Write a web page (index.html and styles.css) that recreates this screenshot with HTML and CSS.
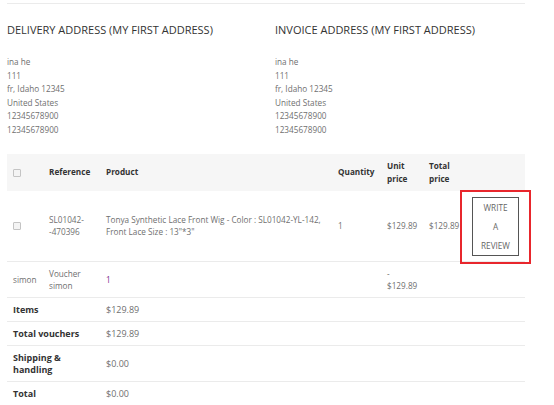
FILE: index.html
```html
<!DOCTYPE html>
<html>
<head>
<meta charset="utf-8">
<link rel="stylesheet" href="styles.css">
</head>
<body>
<div class="page">
  <div class="addresses">
    <div class="address first">
      <h3 class="addr-title">Delivery address (My first address)</h3>
      <div class="addr-lines">
        <div>ina he</div>
        <div>111</div>
        <div>fr, Idaho 12345</div>
        <div>United States</div>
        <div>12345678900</div>
        <div>12345678900</div>
      </div>
    </div>
    <div class="address">
      <h3 class="addr-title">Invoice address (My first address)</h3>
      <div class="addr-lines">
        <div>ina he</div>
        <div>111</div>
        <div>fr, Idaho 12345</div>
        <div>United States</div>
        <div>12345678900</div>
        <div>12345678900</div>
      </div>
    </div>
  </div>

  <table class="order">
    <colgroup>
      <col class="c-check"><col class="c-ref"><col class="c-prod"><col class="c-qty"><col class="c-unit"><col class="c-total"><col class="c-act">
    </colgroup>
    <thead>
      <tr>
        <th><span class="chk"></span></th>
        <th>Reference</th>
        <th>Product</th>
        <th>Quantity</th>
        <th>Unit price</th>
        <th>Total price</th>
        <th></th>
      </tr>
    </thead>
    <tbody>
      <tr class="item">
        <td><span class="chk"></span></td>
        <td>SL01042--470396</td>
        <td>Tonya Synthetic Lace Front Wig - Color : SL01042-YL-142, Front Lace Size : 13"*3"</td>
        <td>1</td>
        <td class="nowrap">$129.89</td>
        <td class="nowrap">$129.89</td>
        <td class="action">
          <span class="highlight"></span>
          <a class="review-btn">WRITE<br>A<br>REVIEW</a>
        </td>
      </tr>
      <tr class="voucher">
        <td>simon</td>
        <td>Voucher simon</td>
        <td><span class="qty-link">1</span></td>
        <td></td>
        <td>-<br>$129.89</td>
        <td></td>
        <td></td>
      </tr>
      <tr class="sum">
        <td colspan="2" class="label">Items</td>
        <td colspan="5">$129.89</td>
      </tr>
      <tr class="sum">
        <td colspan="2" class="label">Total vouchers</td>
        <td colspan="5">$129.89</td>
      </tr>
      <tr class="sum">
        <td colspan="2" class="label">Shipping &amp; handling</td>
        <td colspan="5">$0.00</td>
      </tr>
      <tr class="sum">
        <td colspan="2" class="label">Total</td>
        <td colspan="5">$0.00</td>
      </tr>
    </tbody>
  </table>
</div>
</body>
</html>
```

FILE: styles.css
```css
html, body {
  margin: 0;
  padding: 0;
  background: #fff;
}

body {
  font-family: "Open Sans", "Liberation Sans", sans-serif;
  font-size: 8.2px;
  color: #6f6f6f;
}

.page {
  margin-left: 7px;
  width: 518px;
  padding-top: 3px;
}

.addresses {
  display: flex;
  border-top: 1px solid #ebebeb;
}

.address {
  flex: 1 1 auto;
  min-width: 0;
}

.address.first {
  flex: 0 0 268px;
}

.addr-title {
  margin: 18px 0 0 0;
  font-size: 11px;
  line-height: 16px;
  font-weight: 400;
  text-transform: uppercase;
  color: #333;
  white-space: nowrap;
}

.addr-lines {
  margin-top: 17px;
  line-height: 13.5px;
}

.order {
  margin-top: 18px;
  width: 518px;
  table-layout: fixed;
  border-collapse: collapse;
}

.c-check { width: 36px; }
.c-ref { width: 57px; }
.c-prod { width: 232px; }
.c-qty { width: 49px; }
.c-unit { width: 42px; }
.c-total { width: 30px; }
.c-act { width: 72px; }

.order th {
  background: #f6f6f6;
  color: #333;
  font-weight: 700;
  text-align: left;
  padding: 6px 0 6px 6px;
  line-height: 12.5px;
  vertical-align: middle;
}

.order td {
  padding: 5.5px 0 5.5px 6px;
  line-height: 12px;
  vertical-align: middle;
  border-bottom: 1px solid #ebebeb;
}

.voucher td {
  line-height: 11.5px;
  padding: 6px 0 6px 6px;
}

.nowrap {
  white-space: nowrap;
}

.chk {
  display: block;
  width: 6px;
  height: 6px;
  border: 1px solid #c4c4c4;
  border-radius: 1px;
  background: #f4f4f4;
}

.sum td {
  font-size: 9px;
}

.order td.label {
  font-weight: 700;
  color: #333;
}

.qty-link {
  color: #7b2d8e;
}

.action {
  position: relative;
}

.highlight {
  position: absolute;
  left: 7px;
  top: -1px;
  width: 71px;
  height: 74px;
  box-sizing: border-box;
  border: 2px solid #e8262c;
}

.review-btn {
  display: block;
  width: 45px;
  margin-left: 13px;
  border: 1px solid #555;
  text-align: center;
  line-height: 19px;
  color: #666;
  font-size: 8.2px;
}
```
